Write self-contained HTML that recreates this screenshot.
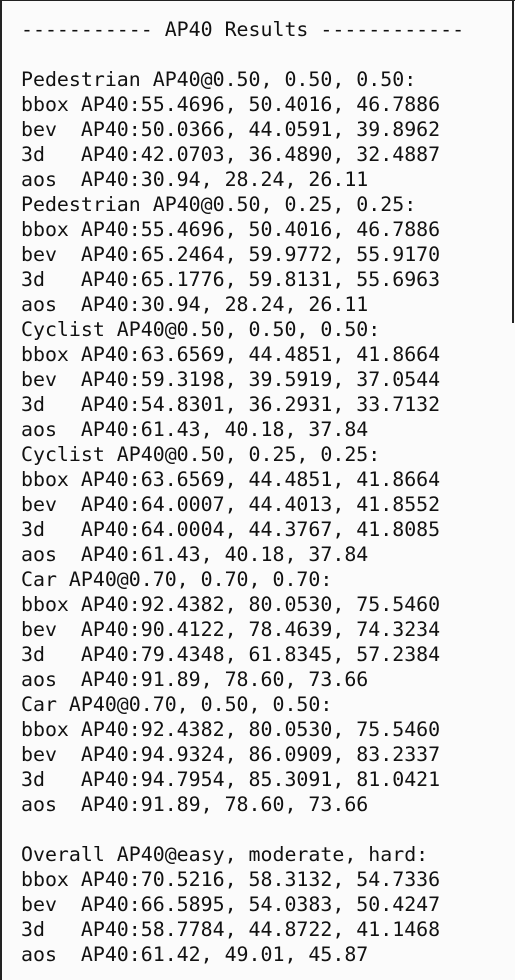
<!DOCTYPE html>
<html><head><style>
html,body{margin:0;padding:0;}
body{width:515px;height:980px;background:#fbfbfb;position:relative;overflow:hidden;}
.bl{position:absolute;left:0;top:0;width:2px;height:980px;background:#222;}
.bt{position:absolute;left:0;top:0;width:515px;height:1px;background:#222;}
.br{position:absolute;left:512px;top:0;width:2px;height:323px;background:#222;}
pre{position:absolute;left:21px;top:17px;margin:0;font-family:"DejaVu Sans Mono","Liberation Mono",monospace;font-size:19.9px;line-height:25px;color:#111;}
</style></head><body>
<div class="bl"></div><div class="bt"></div><div class="br"></div>
<pre>----------- AP40 Results ------------

Pedestrian AP40@0.50, 0.50, 0.50:
bbox AP40:55.4696, 50.4016, 46.7886
bev  AP40:50.0366, 44.0591, 39.8962
3d   AP40:42.0703, 36.4890, 32.4887
aos  AP40:30.94, 28.24, 26.11
Pedestrian AP40@0.50, 0.25, 0.25:
bbox AP40:55.4696, 50.4016, 46.7886
bev  AP40:65.2464, 59.9772, 55.9170
3d   AP40:65.1776, 59.8131, 55.6963
aos  AP40:30.94, 28.24, 26.11
Cyclist AP40@0.50, 0.50, 0.50:
bbox AP40:63.6569, 44.4851, 41.8664
bev  AP40:59.3198, 39.5919, 37.0544
3d   AP40:54.8301, 36.2931, 33.7132
aos  AP40:61.43, 40.18, 37.84
Cyclist AP40@0.50, 0.25, 0.25:
bbox AP40:63.6569, 44.4851, 41.8664
bev  AP40:64.0007, 44.4013, 41.8552
3d   AP40:64.0004, 44.3767, 41.8085
aos  AP40:61.43, 40.18, 37.84
Car AP40@0.70, 0.70, 0.70:
bbox AP40:92.4382, 80.0530, 75.5460
bev  AP40:90.4122, 78.4639, 74.3234
3d   AP40:79.4348, 61.8345, 57.2384
aos  AP40:91.89, 78.60, 73.66
Car AP40@0.70, 0.50, 0.50:
bbox AP40:92.4382, 80.0530, 75.5460
bev  AP40:94.9324, 86.0909, 83.2337
3d   AP40:94.7954, 85.3091, 81.0421
aos  AP40:91.89, 78.60, 73.66

Overall AP40@easy, moderate, hard:
bbox AP40:70.5216, 58.3132, 54.7336
bev  AP40:66.5895, 54.0383, 50.4247
3d   AP40:58.7784, 44.8722, 41.1468
aos  AP40:61.42, 49.01, 45.87</pre>
</body></html>
